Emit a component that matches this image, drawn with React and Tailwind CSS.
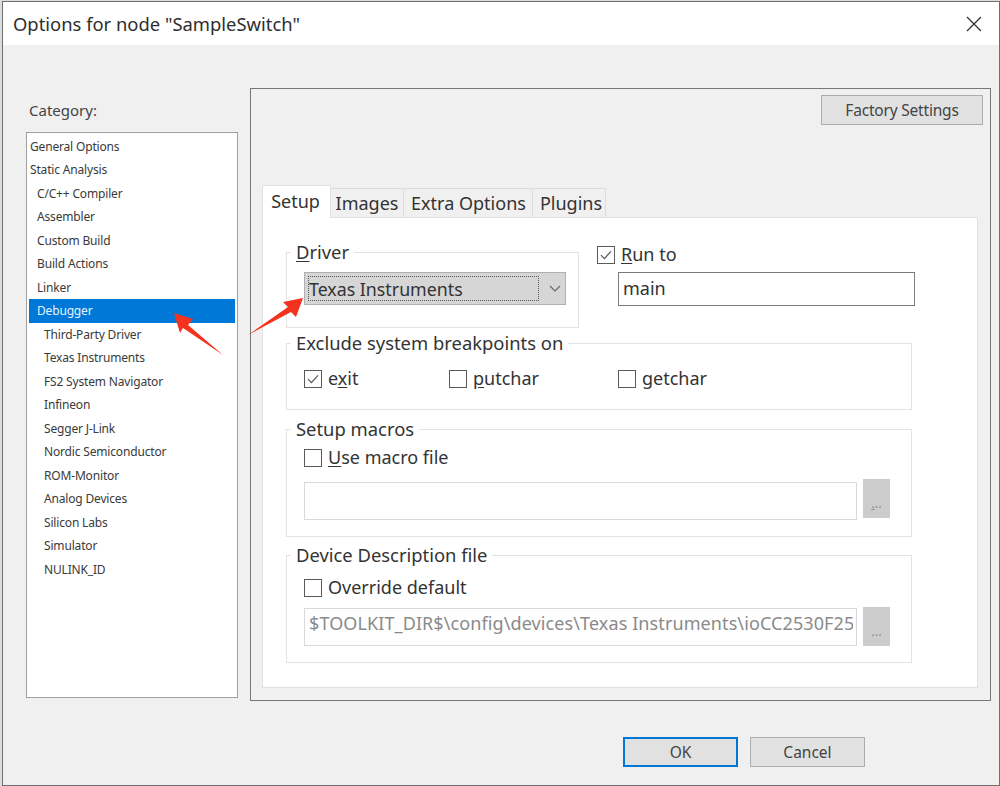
import React from "react";

const items = [
  ["General Options", 0], ["Static Analysis", 0], ["C/C++ Compiler", 1], ["Assembler", 1], ["Custom Build", 1],
  ["Build Actions", 1], ["Linker", 1], ["Debugger", 1], ["Third-Party Driver", 2], ["Texas Instruments", 2],
  ["FS2 System Navigator", 2], ["Infineon", 2], ["Segger J-Link", 2], ["Nordic Semiconductor", 2], ["ROM-Monitor", 2],
  ["Analog Devices", 2], ["Silicon Labs", 2], ["Simulator", 2], ["NULINK_ID", 2],
];

function Check({ checked }) {
  return (
    <span className="flex h-[18px] w-[18px] shrink-0 items-center justify-center border border-[#5a5a5a] bg-white">
      {checked && (
        <svg width="14" height="14" viewBox="0 0 14 14" fill="none" stroke="#555" strokeWidth="1.2">
          <path d="M2 7.2 L5.4 10.6 L12 3.4" />
        </svg>
      )}
    </span>
  );
}

function CheckRow({ checked, children, className = "" }) {
  return (
    <label className={`flex items-center gap-[6px] ${className}`}>
      <Check checked={checked} />
      <span>{children}</span>
    </label>
  );
}

function Group({ title, className = "", children }) {
  return (
    <fieldset className={`border border-[#e3e3e3] pl-[17px] pr-[12px] ${className}`}>
      <legend className="-ml-[13px] px-[5px] text-[18.4px] leading-6 text-[#333]">{title}</legend>
      {children}
    </fieldset>
  );
}

function PathRow({ value, dots, inputClass }) {
  return (
    <div className="flex items-start gap-[6px]">
      <div className={`flex h-[38px] w-[553px] items-center whitespace-nowrap border border-[#d9d9d9] bg-white pb-[8px] pl-[4px] tracking-[0.1px] text-[#8a8a8a] ${inputClass}`}>
        <span className="block w-[544px] overflow-hidden">{value}</span>
      </div>
      <div className="flex h-[39px] w-[27px] items-center justify-center bg-[#cccccc] pt-[10px] text-[13px] text-[#8e8e8e]">{dots}</div>
    </div>
  );
}

function Arrows() {
  return (
    <svg className="pointer-events-none absolute left-0 top-0" width="1000" height="786" viewBox="0 0 1000 786">
      <polygon fill="#f4331f" points="174,313 193,319 188,325 223,355 183,328 180,333" />
      <polygon fill="#f4331f" points="303,298 283,302 288,307 248,335 291,312 296,317" />
    </svg>
  );
}

export default function App() {
  return (
    <div className="relative h-[786px] w-[1000px] overflow-hidden bg-[#dcdcdc] pl-[2px] pt-[1px] text-[#333]" style={{ fontFamily: '"Noto Sans", sans-serif' }}>
      <div className="flex h-[785px] w-[998px] flex-col border border-[#6f6f6f] bg-[#f0f0f0]">
        <div className="flex h-[43px] shrink-0 items-center justify-between bg-white pl-[10px] pr-[17px] text-[18.4px] text-[#2e2e2e]">
          <span>Options for node "SampleSwitch"</span>
          <svg width="16" height="16" viewBox="0 0 16 16" fill="none" stroke="#333" strokeWidth="1.3">
            <path d="M1 1 L15 15 M15 1 L1 15" />
          </svg>
        </div>

        <div className="flex gap-[12px] pl-[23px] pt-[43px]">
          <div className="w-[212px]">
            <div className="flex h-[44px] items-start pl-[3px] pt-[11px] text-[15px] leading-[22px] text-[#444]">Category:</div>
            <div className="h-[566px] border border-[#a0a0a0] bg-white px-[2px] pt-[1.5px] text-[12px] tracking-[-0.17px] text-[#3a3a3a]">
              {items.map(([name, level]) => (
                <div
                  key={name}
                  className={`flex h-[23.5px] items-center pt-[1px] ${level === 0 ? "pl-[1px]" : level === 1 ? "pl-[8px]" : "pl-[15px]"} ${name === "Debugger" ? "bg-[#0078d7] text-[#e8f2fb]" : ""}`}
                >
                  {name}
                </div>
              ))}
            </div>
          </div>

          <div className="flex h-[613px] w-[741px] flex-col border border-[#777] text-[18px]">
            <div className="flex justify-end pr-[7px] pt-[6px]">
              <button className="h-[30px] w-[162px] border border-[#adadad] bg-[#e1e1e1] pt-[1px] text-[15.5px] tracking-[-0.2px] text-[#444]">Factory Settings</button>
            </div>

            <div className="mt-[60px] flex h-[32px] items-end pl-[11px]">
              <div className="relative z-10 mb-[-1px] flex h-[33px] w-[69px] items-center justify-center border border-b-0 border-[#e0e0e0] bg-white pb-[2px] pr-[2px]">Setup</div>
              <div className="flex h-[29px] w-[73px] items-center justify-center border-r border-t border-[#dcdcdc]">Images</div>
              <div className="flex h-[29px] w-[129px] items-center justify-center border-r border-t border-[#dcdcdc] pl-[1px]">Extra Options</div>
              <div className="flex h-[29px] w-[73px] items-center justify-center border-r border-t border-[#dcdcdc] pl-[4px]">Plugins</div>
            </div>

            <div className="ml-[11px] h-[471px] w-[716px] border border-[#e0e0e0] bg-white pl-[23px] pt-[22px]">
              <div className="flex gap-[18px]">
                <Group title={<span><span className="underline underline-offset-2">D</span>river</span>} className="h-[88px] w-[293px]">
                  <div className="mt-[8px] flex h-[33px] w-[262px] items-center border border-[#b0b0b0] bg-[#d6d6d6]">
                    <div className="ml-[3px] flex h-[25px] w-[231px] items-center border border-dotted border-[#555] pt-[1px] text-[17.8px]">Texas Instruments</div>
                    <svg className="ml-[10px]" width="12" height="8" viewBox="0 0 12 8" fill="none" stroke="#666" strokeWidth="1.1">
                      <path d="M1 1 L6 6 L11 1" />
                    </svg>
                  </div>
                </Group>
                <div className="pt-[1px]">
                  <CheckRow checked>
                    <span className="underline underline-offset-2">R</span>un to
                  </CheckRow>
                  <div className="ml-[21px] mt-[4px] flex h-[34px] w-[297px] items-center border border-[#7a7a7a] bg-white pb-[2px] pl-[4px]">main</div>
                </div>
              </div>

              <Group title="Exclude system breakpoints on" className="mt-[3px] h-[79px] w-[626px]">
                <div className="mt-[10px] flex">
                  <CheckRow checked className="w-[145px]">
                    e<span className="underline underline-offset-2">x</span>it
                  </CheckRow>
                  <CheckRow className="w-[169px]">
                    <span className="underline underline-offset-2">p</span>utchar
                  </CheckRow>
                  <CheckRow>
                    <span className="underline underline-offset-2">g</span>etchar
                  </CheckRow>
                </div>
              </Group>

              <Group title="Setup macros" className="mt-[7px] h-[120px] w-[626px]">
                <div className="mt-[3px]">
                  <CheckRow>
                    <span className="underline underline-offset-2">U</span>se macro file
                  </CheckRow>
                </div>
                <div className="mt-[8px]">
                  <PathRow value="" inputClass="mt-[3px]" dots={<span><span className="underline">.</span>..</span>} />
                </div>
              </Group>

              <Group title="Device Description file" className="mt-[6px] h-[120px] w-[626px]">
                <div className="mt-[7px]">
                  <CheckRow>Override default</CheckRow>
                </div>
                <div className="mt-[6px]">
                  <PathRow value={"$TOOLKIT_DIR$\\config\\devices\\Texas Instruments\\ioCC2530F25"} inputClass="mt-[1px]" dots="..." />
                </div>
              </Group>
            </div>
          </div>
        </div>

        <div className="flex justify-end gap-[12px] pr-[134px] pt-[36px] text-[15.5px] text-[#444]">
          <button className="h-[30px] w-[115px] border-2 border-[#0078d7] bg-[#e1e1e1] pt-[1px]">OK</button>
          <button className="h-[30px] w-[115px] border border-[#adadad] bg-[#e1e1e1] pt-[1px]">Cancel</button>
        </div>
      </div>
      <Arrows />
    </div>
  );
}
